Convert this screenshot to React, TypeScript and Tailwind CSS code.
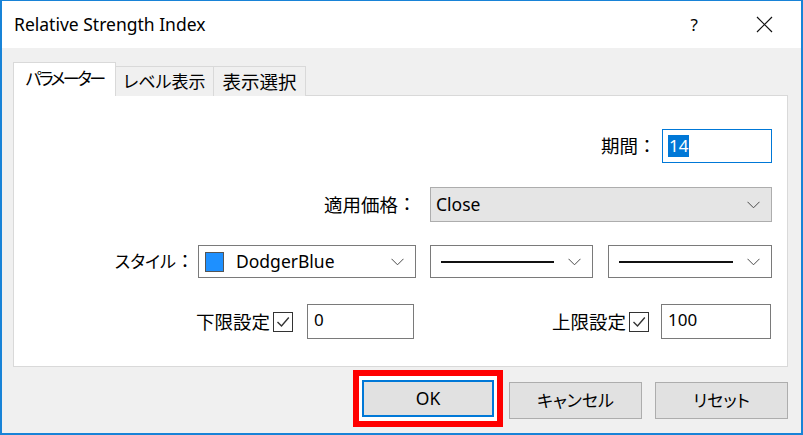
import React from 'react'

function Chevron() {
  return (
    <svg width="13" height="8" viewBox="0 0 13 8" className="shrink-0">
      <path d="M0.5 0.8 L6.5 6.8 L12.5 0.8" fill="none" stroke="#4a4a4a" strokeWidth="1" />
    </svg>
  )
}

function CheckBox() {
  return (
    <span className="w-[20px] h-[20px] border border-[#333] bg-white flex items-center justify-center shrink-0">
      <svg width="14" height="12" viewBox="0 0 14 12">
        <path d="M1.5 6 L5.5 10 L12.8 1.5" fill="none" stroke="#333" strokeWidth="1.4" />
      </svg>
    </span>
  )
}

function LineCombo({ width }: { width: string }) {
  return (
    <div className={`${width} h-[33px] bg-white border border-[#7a7a7a] flex items-center pl-[10px] pr-[11px] gap-[14px]`}>
      <div className="flex-1 h-[2px] bg-[#111]" />
      <Chevron />
    </div>
  )
}

function Colon() {
  return <span className="text-[18px] [font-feature-settings:normal]">：</span>
}

export default function App() {
  return (
    <div className="w-[803px] h-[435px] flex flex-col border-[#1883d7] border-t border-x-2 border-b-2 bg-[#f0f0f0] text-[17.5px] text-black font-['Noto_Sans','Noto_Sans_CJK_JP',sans-serif] [font-feature-settings:'palt'] overflow-hidden">
      {/* Title bar */}
      <div className="h-[47px] bg-white flex items-center pl-[12px] pr-[28px] shrink-0">
        <span className="text-[17.5px]">Relative Strength Index</span>
        <span className="ml-auto text-[17px] mr-[58px]">?</span>
        <svg width="17" height="17" viewBox="0 0 17 17">
          <path d="M1 1 L16 16 M16 1 L1 16" stroke="#111" strokeWidth="1.2" />
        </svg>
      </div>

      <div className="flex-1 flex flex-col pl-[11px] pr-[13px] pt-[14px]">
        {/* Tabs */}
        <div className="flex items-end h-[34px] relative z-10 -mb-px">
          <div className="h-[34px] w-[103px] bg-white border-x border-t border-[#d9d9d9] flex items-center justify-center pb-[2px] text-[17px] tracking-[-2.6px]">
            パラメーター
          </div>
          <div className="h-[30px] w-[98px] bg-[#f0f0f0] border-t border-r border-[#d9d9d9] flex items-center justify-center text-[17px]">
            レベル表示
          </div>
          <div className="h-[30px] w-[92px] bg-[#f0f0f0] border-t border-r border-[#d9d9d9] flex items-center justify-center text-[18.5px]">
            表示選択
          </div>
        </div>

        {/* Panel */}
        <div className="h-[272px] w-[775px] bg-white border border-[#d9d9d9] pr-[15px] pt-[33px] flex flex-col">
          <div className="flex justify-end items-center h-[34px]">
            <span className="text-[18.5px]">期間</span>
            <Colon />
            <div className="ml-[6px] w-[110px] h-[34px] border border-[#0078d7] flex items-center pl-[5px]">
              <span className="bg-[#0078d7] text-white text-[17px] px-px leading-[22px]">14</span>
            </div>
          </div>

          <div className="grid grid-cols-[1fr_342px] gap-x-[14px] mt-[24px] h-[35px]">
            <div className="flex justify-end items-center">
              <span className="text-[18.5px]">適用価格</span>
              <Colon />
            </div>
            <div className="h-[35px] bg-[#e5e5e5] border border-[#adadad] flex items-center pl-[5px] pr-[11px]">
              <span>Close</span>
              <span className="ml-auto"><Chevron /></span>
            </div>
          </div>

          <div className="grid grid-cols-[1fr_342px] gap-x-[14px] mt-[23px] h-[33px]">
            <div className="flex justify-end items-center">
              <span className="text-[17px]">スタイル</span>
              <Colon />
              <div className="ml-[4px] w-[218px] h-[33px] bg-white border border-[#7a7a7a] flex items-center pl-[6px] pr-[11px]">
                <span className="w-[19px] h-[20px] bg-[#1e90ff] border border-[#555]" />
                <span className="ml-[12px]">DodgerBlue</span>
                <span className="ml-auto"><Chevron /></span>
              </div>
            </div>
            <div className="flex justify-between">
              <LineCombo width="w-[163px]" />
              <LineCombo width="w-[164px]" />
            </div>
          </div>

          <div className="grid grid-cols-[1fr_342px] gap-x-[14px] mt-[26px] h-[35px]">
            <div className="flex justify-end items-center pr-[2px]">
              <span className="text-[18.5px]">下限設定</span>
              <span className="ml-[3px]"><CheckBox /></span>
              <div className="ml-[14px] w-[107px] h-[35px] bg-white border border-[#7a7a7a] pl-[6px] pt-[5px] leading-[20px] text-[17px]">0</div>
            </div>
            <div className="flex justify-end items-center pr-[1px]">
              <span className="text-[18.5px]">上限設定</span>
              <span className="ml-[3px]"><CheckBox /></span>
              <div className="ml-[12px] w-[110px] h-[35px] bg-white border border-[#7a7a7a] pl-[6px] pt-[5px] leading-[20px] text-[17px]">100</div>
            </div>
          </div>
        </div>

        {/* Buttons */}
        <div className="flex items-start mt-[3px] pl-[340px]">
          <div className="border-[6px] border-[#ff0000] px-[3px] py-[4px] bg-white">
            <button className="w-[132px] h-[37px] bg-[#e1e1e1] border-2 border-[#0078d7] flex items-center justify-center">
              OK
            </button>
          </div>
          <button className="ml-[6px] mt-[12px] w-[134px] h-[37px] bg-[#e1e1e1] border border-[#adadad] flex items-center justify-center text-[17px]">
            キャンセル
          </button>
          <button className="ml-[13px] mt-[12px] w-[134px] h-[37px] bg-[#e1e1e1] border border-[#adadad] flex items-center justify-center text-[17px]">
            リセット
          </button>
        </div>
      </div>
    </div>
  )
}
